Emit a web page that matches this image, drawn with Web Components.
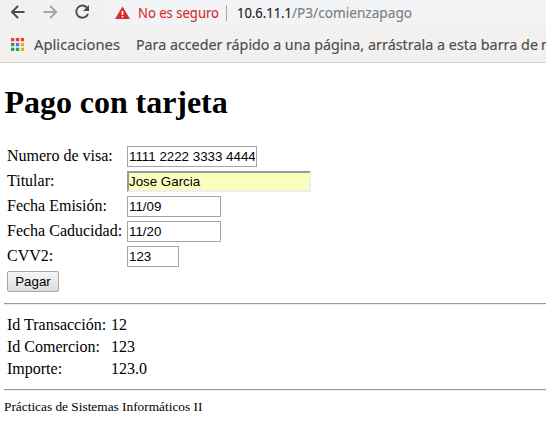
<!DOCTYPE html>
<html lang="es">
<head>
<meta charset="utf-8">
<title>Pago con tarjeta</title>
<style>
html,body{margin:0;height:428px;overflow:hidden;background:#fff}
</style>
</head>
<body>
<pago-app></pago-app>
<script>
const define = (name, html) => customElements.define(name, class extends HTMLElement {
  connectedCallback() {
    if (this.shadowRoot) return;
    this.attachShadow({mode: 'open'}).innerHTML = typeof html === 'function' ? html(this) : html;
  }
});

/* One line of interface text, set to an exact advance width. */
define('fit-text', el => {
  const w = el.getAttribute('w'), s = el.getAttribute('size') || 14.5;
  return `<style>:host{display:block;flex:none;height:20px;width:${w}px}
  svg{display:block;overflow:visible}
  text{font-family:"Noto Sans","Open Sans",sans-serif;font-size:${s}px;fill:currentColor;stroke:currentColor;stroke-width:.15px}</style>
  <svg width="${w}" height="20"><text x="0" y="15" textLength="${w}" lengthAdjust="spacingAndGlyphs">${el.getAttribute('text')}</text></svg>`;
});

define('nav-buttons', `<style>:host{display:block;flex:none;width:104px;height:26px}svg{display:block}</style>
<svg width="104" height="26" fill="none" stroke-width="1.9">
<path d="M24.500 12H12.200M18 6l-6 6 6 6" stroke="#4b4c4f"/>
<path d="M43.500 12H56M50.200 6l6 6-6 6" stroke="#a5a5a5"/>
<path d="M86.900 7.600A6.050 6.050 0 1 0 88 13.800" stroke="#4b4c4f"/>
<path d="M89 5v6h-6z" fill="#4b4c4f"/>
</svg>`);

define('address-bar', `<style>
:host{display:flex;flex:1;height:26px;background:#f1f3f4;border-radius:13px 0 0 13px;align-items:flex-start;box-sizing:border-box;padding:3px 0 0 11px}
svg{flex:none}.w{color:#d32f2f;margin-left:8px}.sep{width:1px;height:16px;background:#a9abad;margin:2px 10px 0 7px}
.h{color:#202124}.p{color:#7c8085}
</style>
<svg width="15" height="20"><path d="M7.500 3.500L15 16H0z" fill="#d32f2f"/><path d="M6.700 8h1.600v4H6.700zM6.700 13h1.600v1.600H6.700z" fill="#fff"/></svg>
<fit-text class="w" w="81" size="14" text="No es seguro"></fit-text><div class="sep"></div>
<fit-text class="h" w="55" size="14" text="10.6.11.1"></fit-text><fit-text class="p" w="120" size="14" text="/P3/comienzapago"></fit-text>`);

define('bookmarks-bar', `<style>
:host{display:flex;height:36px;box-sizing:border-box;padding:9px 0 0 11px;overflow:hidden;color:#4d4d50}
svg{flex:none;margin-top:3px}.a{margin-left:10px}.b{margin-left:16px}.c{margin-left:3px}
</style>
<svg width="13" height="13" viewBox="0 0 13.300 13.300">
<path d="M0 0h3.400v3.400H0zM5 0h3.400v3.400H5zM10 0h3.300v3.400H10z" fill="#f03a38"/>
<path d="M0 5h3.400v3.400H0z" fill="#2f9f50"/><path d="M5 5h3.400v3.400H5z" fill="#3d80f5"/><path d="M10 5h3.300v3.400H10z" fill="#f2a31c"/>
<path d="M0 10h3.400v3.300H0zM5 10h3.400v3.300H5z" fill="#2f9f50"/><path d="M10 10h3.300v3.300H10z" fill="#f2a31c"/></svg>
<fit-text class="a" w="86" text="Aplicaciones"></fit-text>
<fit-text class="b" w="228" text="Para acceder rápido a una página,"></fit-text>
<fit-text style="margin-left:4px" w="170" text="arrástrala a esta barra de"></fit-text>
<fit-text class="c" w="13" text="m"></fit-text>`);

define('browser-chrome', `<style>:host{display:block;height:63px;box-sizing:border-box;background:#f2f1f0;border-bottom:1px solid #cfcecb}
.t{display:flex}</style>
<div class="t"><nav-buttons></nav-buttons><address-bar></address-bar></div><bookmarks-bar></bookmarks-bar>`);

define('form-field', el => `<style>
:host{display:grid;grid-template-columns:120px auto;justify-content:start;height:25px;align-items:start}
label{line-height:18px;padding-top:1px;white-space:nowrap}
input{font:13.333px "Liberation Sans",sans-serif;color:#000;height:21px;margin:0;box-sizing:border-box;border:1px solid #a6a6a6;padding:1px;outline:0;background:#fff;border-radius:0}
input.auto{background:#faffbd;border:2px solid;border-color:#999 #eee #eee #999;padding:1px 0}
</style><label>${el.getAttribute('label')}</label><input class="${el.getAttribute('kind') || ''}" style="width:${el.getAttribute('w')}px" value="${el.getAttribute('value')}">`);

define('pay-button', `<style>:host{display:block;height:21px}
button{display:block;width:52px;height:21px;box-sizing:border-box;padding:0;margin:0;font:13.333px/17px "Liberation Sans",sans-serif;color:#000;border:1px solid #a6a6a6;border-radius:2px;background:linear-gradient(#f6f6f6,#dedede)}
</style><button><slot></slot></button>`);

define('rule-line', `<style>:host{display:block;height:1px;border-top:1px solid #999;background:#eee}</style>`);

define('info-row', el => `<style>:host{display:grid;grid-template-columns:104px auto;justify-content:start;height:22px;line-height:18px;white-space:nowrap}</style>
<span>${el.getAttribute('label')}</span><span><slot></slot></span>`);

define('pago-app', `<style>
:host{display:block;width:546px;height:428px;overflow:hidden;background:#fff;color:#000;font:16px "Liberation Serif",serif}
main{padding-left:4px}
h1{margin:0;padding:21px 0 25px .5px;font-size:32px;line-height:37px;font-weight:bold;letter-spacing:-.05px}
.f{padding-left:3px}.i{padding:11px 0 7px 3px}
rule-line.one{margin-top:11px}
footer{font-size:13.333px;line-height:15px;padding-top:8px}
</style>
<browser-chrome></browser-chrome>
<main><h1>Pago con tarjeta</h1>
<div class="f">
<form-field label="Numero de visa:" w="130" value="1111 2222 3333 4444"></form-field>
<form-field label="Titular:" w="184" value="Jose Garcia" kind="auto"></form-field>
<form-field label="Fecha Emisión:" w="94" value="11/09"></form-field>
<form-field label="Fecha Caducidad:" w="94" value="11/20"></form-field>
<form-field label="CVV2:" w="52" value="123"></form-field>
<pay-button>Pagar</pay-button>
</div>
<rule-line class="one"></rule-line>
<div class="i">
<info-row label="Id Transacción:">12</info-row>
<info-row label="Id Comercion:">123</info-row>
<info-row label="Importe:">123.0</info-row>
</div>
<rule-line></rule-line>
<footer>Prácticas de Sistemas Informáticos II</footer>
</main>`);
</script>
</body>
</html>
